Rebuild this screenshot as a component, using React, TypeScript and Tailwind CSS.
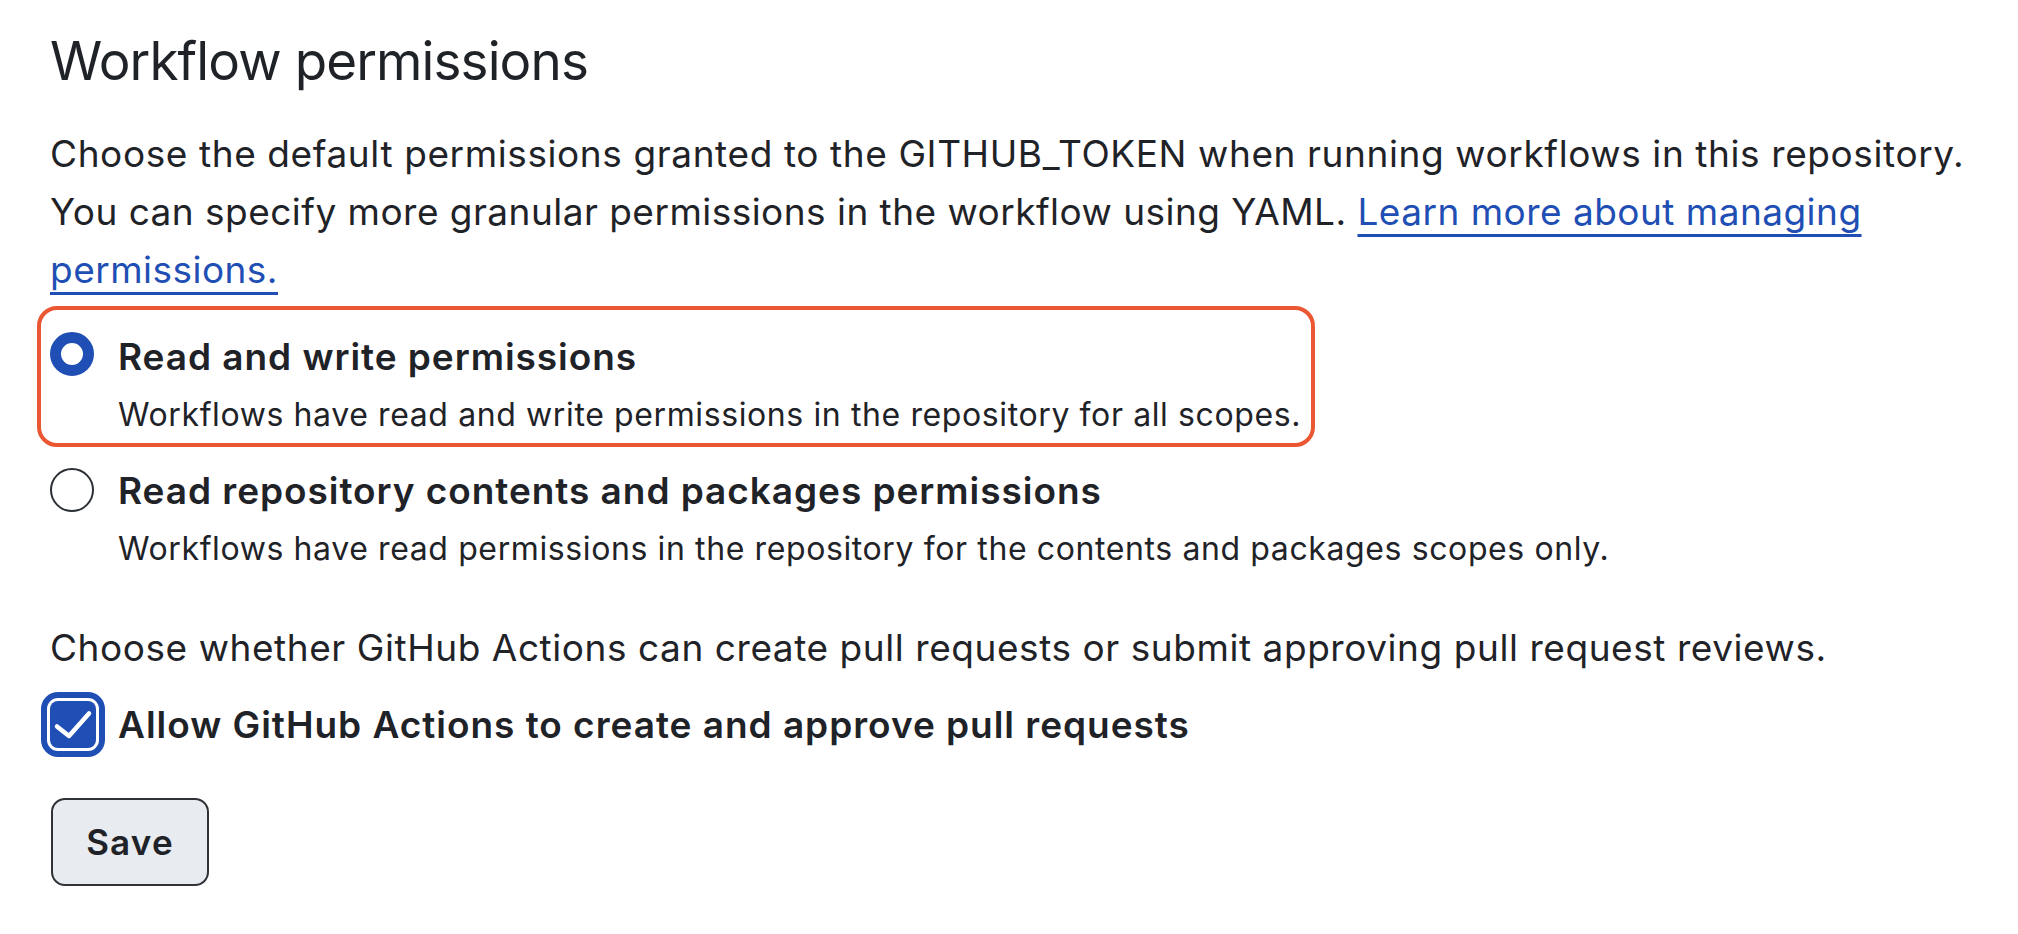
import React from "react";

export default function App() {
  return (
    <div className="min-h-[934px] w-[2018px] bg-white font-['Inter',sans-serif] text-[#1f2328]">
      <div className="flex flex-col items-start pl-[50px] pt-[28px]">
        <h2 className="text-[53px] font-normal leading-[66px] tracking-[-0.9px]">Workflow permissions</h2>

        <p className="mt-[31px] whitespace-nowrap text-[37px] leading-[58px] tracking-[0.6px]">
          Choose the default permissions granted to the GITHUB_TOKEN when running workflows in this repository.
          <br />
          <span className="tracking-[0.47px]">
            You can specify more granular permissions in the workflow using YAML.{" "}
            <a className="text-[#1f4fb4] underline decoration-[3px] underline-offset-[9px]" href="#">
              Learn more about managing
              <br />
              permissions.
            </a>
          </span>
        </p>

        <div className="ml-[-13px] mt-[7px] w-[1278px] rounded-[20px] border-[4px] border-[#eb5633] pb-[4px] pl-[9px] pt-[18px]">
          <div className="flex items-start">
            <span className="mt-[4px] box-border h-[44px] w-[44px] shrink-0 rounded-full border-[11px] border-[#1f4fb4] bg-white" />
            <div className="ml-[24px] flex flex-col whitespace-nowrap">
              <span className="text-[37px] font-semibold leading-[58px] tracking-[0.95px]">Read and write permissions</span>
              <span className="mt-[5px] text-[32px] leading-[48px] tracking-[0.61px]">
                Workflows have read and write permissions in the repository for all scopes.
              </span>
            </div>
          </div>
        </div>

        <div className="mt-[15px] flex items-start">
          <span className="mt-[6px] box-border h-[44px] w-[44px] shrink-0 rounded-full border-[2.5px] border-[#2b3036] bg-white" />
          <div className="ml-[24px] flex flex-col whitespace-nowrap">
            <span className="text-[37px] font-semibold leading-[58px] tracking-[0.95px]">Read repository contents and packages permissions</span>
            <span className="mt-[5px] text-[32px] leading-[48px] tracking-[0.61px]">
              Workflows have read permissions in the repository for the contents and packages scopes only.
            </span>
          </div>
        </div>

        <p className="mt-[46px] whitespace-nowrap text-[37px] leading-[58px] tracking-[0.56px]">
          Choose whether GitHub Actions can create pull requests or submit approving pull request reviews.
        </p>

        <div className="mt-[19px] flex items-start">
          <span className="mt-[5px] flex h-[47px] w-[46px] shrink-0 items-center justify-center rounded-[8px] bg-[#1f4fb4] shadow-[0_0_0_3px_#ffffff,0_0_0_9px_#1f4fb4]">
            <svg width="46" height="47" viewBox="0 0 46 47" fill="none">
              <path d="M7 25.5L19 35L39 12.5" stroke="white" strokeWidth="4.5" strokeLinecap="round" strokeLinejoin="round" />
            </svg>
          </span>
          <span className="ml-[22px] whitespace-nowrap text-[37px] font-semibold leading-[58px] tracking-[0.97px]">
            Allow GitHub Actions to create and approve pull requests
          </span>
        </div>

        <button className="ml-[1px] mt-[44px] box-border flex h-[88px] w-[158px] items-center justify-center rounded-[14px] border-[2px] border-[#2f3237] bg-[#e8ebef] text-[35px] font-semibold tracking-[1.2px] text-[#1f2328]">
          Save
        </button>
      </div>
    </div>
  );
}
